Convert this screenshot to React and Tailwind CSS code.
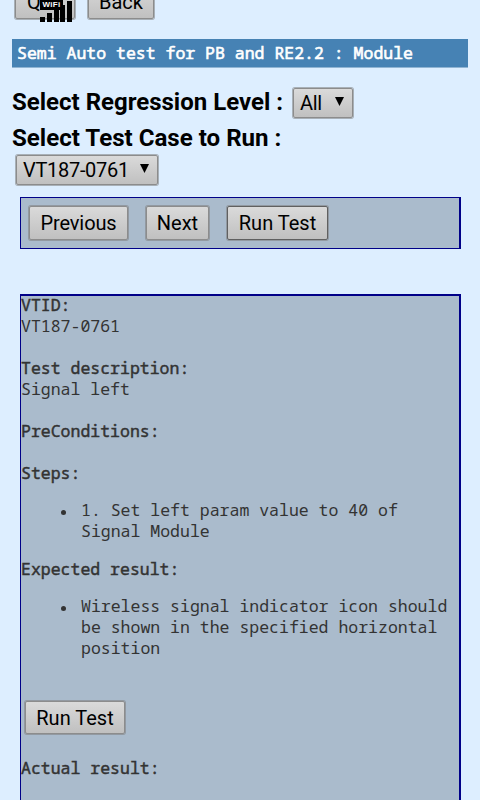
function Button({ children, className }) {
  return (
    <button
      className={`flex shrink-0 items-center justify-center rounded-[2px] border bg-linear-to-b from-[#dadada] to-[#c0c0c0] font-['Roboto',sans-serif] text-[20px] leading-[24px] font-normal text-black shadow-[0_0_0_1px_#80808090] ${className}`}
    >
      {children}
    </button>
  );
}

function Select({ children, className }) {
  return (
    <button
      className={`flex shrink-0 items-center justify-between rounded-[2px] border border-[#8c8c8c] bg-linear-to-b from-[#dadada] to-[#c0c0c0] pr-[8px] pl-[6px] font-['Roboto',sans-serif] text-[20px] leading-[24px] font-normal text-black shadow-[0_0_0_1px_#80808090] ${className}`}
    >
      <span className="tracking-[-0.3px]">{children}</span>
      <svg width="9" height="9" viewBox="0 0 9 9" className="-mt-[3px]">
        <path d="M0 0H9L4.5 9Z" />
      </svg>
    </button>
  );
}

function SignalIndicator() {
  return (
    <div className="absolute top-0 left-[40px] h-[22px] w-[32px]">
      <svg width="32" height="22" viewBox="0 0 32 22" className="absolute" shapeRendering="crispEdges">
        <path d="M0 17h5v5H0zM7 13h5v9H7zM14 9h5v13h-5zM20 5h5v17h-5zM27 1h5v21h-5z" />
      </svg>
      <div className="absolute top-0 left-0 h-[10px] w-[23px] bg-black text-center font-['Liberation_Sans',sans-serif] text-[8px] leading-[9px] font-bold tracking-[0.3px] text-white">
        WiFi
      </div>
    </div>
  );
}

export default function App() {
  return (
    <div className="relative h-[800px] w-[480px] overflow-hidden bg-[#ddeeff] text-black">
      <div className="flex h-[39px] items-start gap-[13px] pl-[15px]">
        <Button className="-mt-[16px] h-[35px] w-[60px] border-[#8c8c8c]">Quit</Button>
        <Button className="-mt-[16px] h-[35px] w-[66px] border-[#8c8c8c]">Back</Button>
      </div>
      <SignalIndicator />

      <h1 className="mx-3 h-[29px] border-b border-[#90b4d3] bg-[#4682b4] pl-[5px] font-['Noto_Sans_Mono','DejaVu_Sans_Mono',monospace] text-[16.5px] leading-[27px] font-normal whitespace-nowrap text-white [-webkit-text-stroke:0.6px]">
        Semi Auto test for PB and RE2.2 : Module
      </h1>

      <div className="mt-[18px] flex h-[34px] items-center pl-3 font-['Roboto',sans-serif] text-[24px] leading-[32px] font-bold">
        <span className="-mt-[2px] w-[281px] whitespace-nowrap">Select Regression Level :</span>
        <Select className="h-[30px] w-[60px]">All</Select>
      </div>
      <div className="h-[34px] pl-3 font-['Roboto',sans-serif] text-[24.1px] leading-[36px] font-bold whitespace-nowrap">
        Select Test Case to Run :
      </div>
      <div className="pt-px pl-[16px]">
        <Select className="h-[30px] w-[142px]">VT187-0761</Select>
      </div>

      <div className="mt-[12px] ml-5 flex h-[52px] w-[441px] items-start gap-[18px] border border-r-2 border-[#000088] bg-[#aabbcc] pt-[8px] pl-[8px]">
        <Button className="h-[34px] w-[99px] border-[#8c8c8c] tracking-[-0.1px]">Previous</Button>
        <Button className="h-[34px] w-[63px] border-[#8c8c8c]">Next</Button>
        <Button className="h-[34px] w-[101px] border-[#606060]">Run Test</Button>
      </div>

      <div className="mt-[45px] ml-5 h-[520px] w-[441px] border-t-2 border-r-2 border-l border-[#000088] bg-[#aabbcc] font-['Noto_Sans_Mono','DejaVu_Sans_Mono',monospace] text-[16.5px] leading-[21px] text-[#333333]">
        <div className="-mt-[2px]">
          <p className="h-[21px] [-webkit-text-stroke:0.45px]">VTID:</p>
          <p className="h-[42px]">VT187-0761</p>
          <p className="h-[21px] [-webkit-text-stroke:0.45px]">Test description:</p>
          <p className="h-[42px]">Signal left</p>
          <p className="h-[42px] [-webkit-text-stroke:0.45px]">PreConditions:</p>
          <p className="h-[37px] [-webkit-text-stroke:0.45px]">Steps:</p>
        </div>
        <ul className="mb-[17px] pl-[60px]">
          <li className="flex">
            <span className="mt-[11px] mr-[15px] -ml-[20px] size-[5px] shrink-0 rounded-full bg-[#333333]" />
            <span>1. Set left param value to 40 of<br />Signal Module</span>
          </li>
        </ul>
        <p className="h-[37px] [-webkit-text-stroke:0.45px]">Expected result:</p>
        <ul className="pl-[60px]">
          <li className="flex">
            <span className="mt-[11px] mr-[15px] -ml-[20px] size-[5px] shrink-0 rounded-full bg-[#333333]" />
            <span className="whitespace-nowrap">Wireless signal indicator icon should<br />be shown in the specified horizontal<br />position</span>
          </li>
        </ul>
        <div className="mt-[43px] pl-[4px]">
          <Button className="h-[33px] w-[100px] border-[#8c8c8c]">Run Test</Button>
        </div>
        <p className="mt-[23px] [-webkit-text-stroke:0.45px]">Actual result:</p>
      </div>
    </div>
  );
}
